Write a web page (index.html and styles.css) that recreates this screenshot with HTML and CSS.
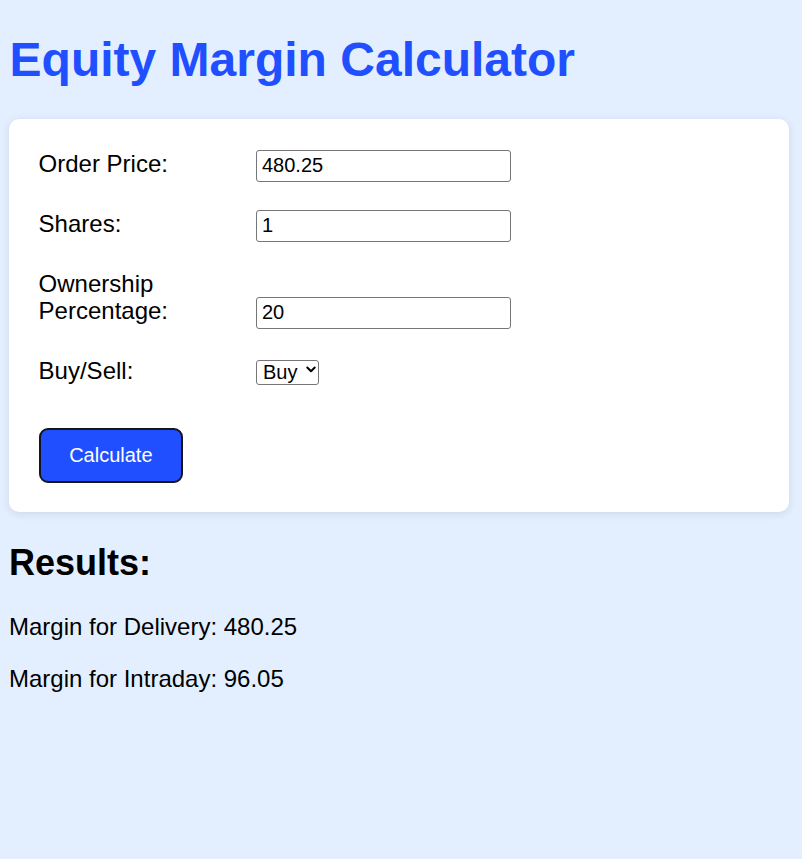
FILE: index.html
```html
<!DOCTYPE html>
<html lang="en">
<head>
<meta charset="utf-8">
<title>Equity Margin Calculator</title>
<link rel="stylesheet" href="styles.css">
</head>
<body>
<h1 class="title">Equity Margin Calculator</h1>
<form class="card" onsubmit="return false;">
  <div class="row"><label class="label" for="price">Order Price:</label><input class="field" id="price" type="text" value="480.25"></div>
  <div class="row"><label class="label" for="shares">Shares:</label><input class="field" id="shares" type="text" value="1"></div>
  <div class="row"><label class="label" for="own">Ownership Percentage:</label><input class="field" id="own" type="text" value="20"></div>
  <div class="row"><label class="label" for="side">Buy/Sell:</label><span class="select-wrap"><select class="select" id="side"><option>Buy</option><option>Sell</option></select><svg class="chev" width="10" height="7" viewBox="0 0 10 7" aria-hidden="true"><path d="M1.3 1.5l3.7 3.7 3.7-3.7" fill="none" stroke="#000" stroke-width="2" stroke-linecap="round" stroke-linejoin="round"/></svg></span></div>
  <button class="btn" type="submit">Calculate</button>
</form>
<h2 class="results-title">Results:</h2>
<p class="result">Margin for Delivery: 480.25</p>
<p class="result">Margin for Intraday: 96.05</p>
</body>
</html>
```
FILE: styles.css
```css
html {
  background: #e3efff;
}
body {
  margin: 0;
  padding: 0 9px;
  font-family: "Liberation Sans", Arial, sans-serif;
  font-size: 24px;
  color: #000;
  background: #e3efff;
  overflow: hidden;
}
.title {
  font-size: 48px;
  font-weight: bold;
  color: #1f4fff;
  margin: 32px 0 32px 0.6px;
  line-height: 1.149;
}
.card {
  display: block;
  width: 780px;
  box-sizing: border-box;
  background: #fff;
  border-radius: 10px;
  box-shadow: 0 2px 8px rgba(0, 0, 0, 0.1);
  padding: 30.5px 29.6px 28.5px;
}
.row {
  margin-bottom: 28px;
  line-height: 1.149;
}
.label {
  display: inline-block;
  width: 217.4px;
  vertical-align: baseline;
}
.field {
  box-sizing: border-box;
  width: 255px;
  height: 32px;
  padding: 0 5px;
  border: 1px solid #767676;
  border-radius: 3px;
  font-family: "Liberation Sans", Arial, sans-serif;
  font-size: 20px;
  color: #000;
  background: #fff;
  vertical-align: baseline;
  margin: 0;
}
.select-wrap {
  position: relative;
  display: inline-block;
  vertical-align: baseline;
}
.select {
  -webkit-appearance: none;
  appearance: none;
  box-sizing: border-box;
  width: 63px;
  height: 25px;
  font-family: "Liberation Sans", Arial, sans-serif;
  font-size: 20px;
  line-height: 23px;
  color: #000;
  border: 1px solid #767676;
  border-radius: 3px;
  background: #fff;
  padding: 0 18px 0 6px;
  margin: 0;
  vertical-align: baseline;
}
.chev {
  position: absolute;
  right: 3px;
  top: 9px;
  pointer-events: none;
}
.btn {
  display: block;
  margin-top: 43.5px;
  box-sizing: border-box;
  width: 144.5px;
  height: 55px;
  padding: 0;
  background: #1f4fff;
  color: #fff;
  border: 2.4px solid #15151f;
  border-radius: 9px;
  font-family: "Liberation Sans", Arial, sans-serif;
  font-size: 20px;
  cursor: pointer;
}
.results-title {
  font-size: 36px;
  font-weight: bold;
  margin: 30px 0;
  line-height: 1.149;
}
.result {
  margin: 24px 0;
  line-height: 1.149;
}
```
